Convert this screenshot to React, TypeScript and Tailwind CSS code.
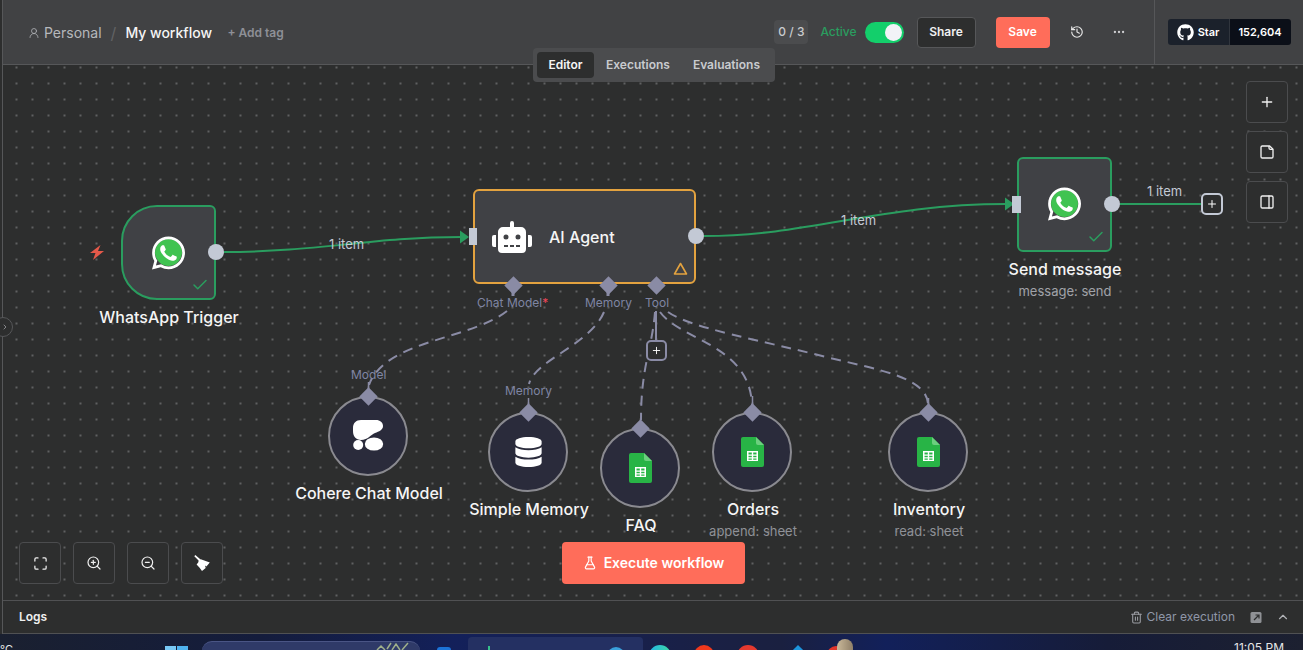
import React from "react";
import {
  UserRound, History, Ellipsis, Plus, PanelRight, Maximize, ZoomIn, ZoomOut,
  FlaskConical, Trash2, ChevronUp, ChevronRight, Check,
} from "lucide-react";
import { FaGithub, FaWhatsapp, FaRobot, FaDatabase } from "react-icons/fa";

function WhatsApp({ className }: { className: string }) {
  return (
    <div className={"absolute w-[33px] h-[34px] " + className}>
      <div className="absolute left-[3px] top-[3px] w-[27px] h-[27px] rounded-full bg-[#40c351]" />
      <FaWhatsapp className="absolute left-0 top-[-2px] w-[33px] h-[38px] text-white" />
    </div>
  );
}

function Sheets() {
  return (
    <svg width="23" height="30" viewBox="0 0 23 30">
      <path d="M2 0H15L23 8V28a2 2 0 0 1-2 2H2a2 2 0 0 1-2-2V2a2 2 0 0 1 2-2z" fill="#28b446" />
      <path d="M15 0L23 8H17a2 2 0 0 1-2-2z" fill="#6ccf7f" />
      <path d="M6 14H17V24H6zM7.5 17.5H10.8V15.5H7.5zM12.2 17.5H15.5V15.5H12.2zM7.5 20.2H10.8V18.8H7.5zM12.2 20.2H15.5V18.8H12.2zM7.5 22.8H10.8V21.6H7.5zM12.2 22.8H15.5V21.6H12.2z" fill="#fff" fillRule="evenodd" />
    </svg>
  );
}

function Cohere() {
  return (
    <svg width="32" height="32" viewBox="0 0 32 32">
      <path d="M9 0H24C28 0 31 2.5 31 6C31 10 27 11.5 23 13C19 14.5 16 20 9 20C4 20 1 16.5 1 11V8C1 3 4 0 9 0z" fill="#fff" />
      <circle cx="6.2" cy="25" r="5" fill="#fff" />
      <ellipse cx="22" cy="24" rx="9.2" ry="6.6" fill="#fff" />
    </svg>
  );
}

function Broom() {
  return (
    <svg width="16" height="16" viewBox="0 0 16 16" fill="#fff">
      <path d="M0.3 1.2L1.3 0L6.6 4.4L5.1 6z" />
      <path d="M4.8 5.2L6.8 4.2L15.8 7.4L12.4 11.4L11 10.6L11.7 13L8 16L5.6 12.8L2.6 9.6L4.2 7.4z" />
    </svg>
  );
}

function ToolBtn({ children }: { children: React.ReactNode }) {
  return (
    <div className="w-[42px] h-[42px] flex items-center justify-center rounded-[4px] border border-[#4b4c4e] bg-[#2d2e2e] text-[#f0f0f0]">
      {children}
    </div>
  );
}

function Circle({ className, children }: { className: string; children: React.ReactNode }) {
  return (
    <div className={"absolute w-[80px] h-[80px] rounded-full border-2 border-[#8a8a90] bg-[#2a2b3b] flex items-center justify-center " + className}>
      {children}
    </div>
  );
}

function Diamond({ className }: { className: string }) {
  return <div className={"absolute w-[13px] h-[13px] rotate-45 bg-[#8a8ba5] " + className} />;
}

export default function App() {
  return (
    <div className="relative w-[1303px] h-[650px] overflow-hidden flex flex-col bg-[#2d2e2e] [font-family:Inter,sans-serif]">
      {/* header */}
      <header className="h-[65px] shrink-0 flex items-center bg-[#414244] border-b border-[#565759] pl-[28px]">
        <div className="flex items-center pt-[2px]">
          <div className="flex items-center gap-[4px] text-[#b6b8bc] text-sm">
            <UserRound size={12} strokeWidth={1.5} />
            <span>Personal</span>
          </div>
          <span className="mx-[9px] text-[#626365] text-base">/</span>
          <span className="text-sm font-medium text-[#f5f5f5] w-[86px] whitespace-nowrap">My workflow</span>
          <span className="ml-[16px] text-xs font-semibold text-[#8e9097] w-[58px] whitespace-nowrap">+ Add tag</span>
        </div>

        <div className="ml-[489px] h-[24px] w-[34px] rounded-[4px] bg-[#4b4c4e] text-[#c9cbce] text-xs font-medium flex items-center justify-center whitespace-nowrap">0 / 3</div>
        <span className="ml-[12px] text-xs font-medium text-[#2a9d5f]">Active</span>
        <div className="ml-[8px] w-[39px] h-[21px] rounded-full bg-[#13cf6b] flex items-center justify-end pr-[2px]">
          <div className="w-[17px] h-[17px] rounded-full bg-[#f2f3f7]" />
        </div>
        <div className="ml-[13px] w-[59px] h-[31px] rounded-[4px] bg-[#2d2e2e] border border-[#565759] text-[#f0f0f0] text-xs font-semibold flex items-center justify-center">Share</div>
        <div className="ml-[20px] w-[54px] h-[31px] rounded-[4px] bg-[#ff6d5a] text-white text-xs font-semibold flex items-center justify-center">Save</div>
        <History size={14} className="ml-[20px] text-[#e8e8e8]" />
        <Ellipsis size={14} className="ml-[28px] text-[#cfcfd2]" />
        <div className="ml-[28px] h-[65px] border-l border-[#565759] pl-[13px] flex items-center">
          <div className="flex h-[26px] rounded-[3px] overflow-hidden text-white text-[11px] font-semibold">
            <div className="w-[61px] bg-[#1b212b] flex items-center justify-center gap-[4px]">
              <FaGithub size={17} />
              <span>Star</span>
            </div>
            <div className="w-[62px] bg-[#0b0f18] border-l border-[#30353d] flex items-center justify-center">152,604</div>
          </div>
        </div>
      </header>

      {/* canvas */}
      <main className="relative flex-1 bg-[#2d2e2e] bg-[radial-gradient(circle_at_center,#606162_0.7px,transparent_1px)] bg-[size:16px_16px] bg-[position:8.5px_-5.5px]">
        <svg className="absolute left-0 top-0" width="1303" height="535" viewBox="0 65 1303 535" fill="none">
          <g stroke="#2a9d5f" strokeWidth="2">
            <path d="M224 252C320 252 370 237 462 237" />
            <path d="M704 236C810 236 880 204 1006 204" />
            <path d="M1120 204H1201" />
          </g>
          <g fill="#2a9d5f">
            <path d="M460 230.5L469 237L460 243.5z" />
            <path d="M1005 197.5L1014 204L1005 210.5z" />
          </g>
          <g stroke="#8a8ba5" strokeWidth="2" strokeDasharray="10 7">
            <path d="M507 311C470 340 385 340 369 385" />
            <path d="M604 312C590 345 535 360 529 384" />
            <path d="M655 312C652 350 641 365 641 420" />
            <path d="M660 312C680 340 750 345 752 405" />
            <path d="M668 312C690 328 760 340 830 358C880 370 928 378 928 405" />
          </g>
          <path d="M656 311V342" stroke="#8a8ba5" strokeWidth="2" />
          <path d="M513 290V296M608 290V296" stroke="#8a8ba5" strokeWidth="3" />
          <path d="M368.5 382V392M528.5 398V408M928.5 398V408M752.5 396V408" stroke="#8a8ba5" strokeWidth="1.5" />
        </svg>

        {/* tabs */}
        <div className="absolute left-[533px] top-[-17px] w-[242px] h-[34px] rounded-[4px] bg-[#4b4c4e] p-[4px] flex items-center text-xs font-semibold text-[#c9cbce]">
          <div className="w-[57px] h-[26px] rounded-[4px] bg-[#2d2e2e] text-[#f5f5f5] flex items-center justify-center">Editor</div>
          <span className="ml-[12px]">Executions</span>
          <span className="ml-[23px]">Evaluations</span>
        </div>

        {/* trigger */}
        <svg className="absolute left-[90px] top-[180px]" width="14" height="15" viewBox="0 0 14 15">
          <path d="M10.5 0L0 8H5.5L3 15L14 6H8z" fill="#e5594a" />
        </svg>
        <div className="absolute left-[121px] top-[140px] w-[95px] h-[95px] rounded-l-[36px] rounded-r-[6px] border-2 border-[#2a9d5f] bg-[#404145]" />
        <WhatsApp className="left-[152px] top-[171px]" />
        <Check size={18} className="absolute left-[191px] top-[211px] text-[#2a9d5f]" />
        <div className="absolute left-[208px] top-[179px] w-[16px] h-[16px] rounded-full bg-[#c3c9d5]" />
        <div className="absolute left-[69px] top-[241px] w-[200px] text-center text-base font-medium text-[#f5f5f5] leading-[22px]">WhatsApp Trigger</div>
        <div className="absolute left-[329px] top-[171px] text-[13px] text-[#c3c9d5] leading-4">1 item</div>

        {/* agent */}
        <div className="absolute left-[473px] top-[124px] w-[223px] h-[95px] rounded-[6px] border-2 border-[#e3a23f] bg-[#404145] flex items-center text-[#f5f5f5]">
          <FaRobot className="ml-[17px] w-[40px] h-[32px] text-white" />
          <span className="ml-[17px] text-base font-medium">AI Agent</span>
        </div>
        <div className="absolute left-[469px] top-[163px] w-[8px] h-[17px] bg-[#c3c9d5]" />
        <div className="absolute left-[688px] top-[163px] w-[16px] h-[16px] rounded-full bg-[#c3c9d5]" />
        <svg className="absolute left-[673px] top-[197px]" width="15" height="13" viewBox="0 0 15 13" fill="none">
          <path d="M7.5 1.5L13.5 12H1.5z" stroke="#e3a23f" strokeWidth="1.6" strokeLinejoin="round" />
        </svg>
        <Diamond className="left-[507px] top-[214px]" />
        <Diamond className="left-[602px] top-[214px]" />
        <Diamond className="left-[650px] top-[214px]" />
        <div className="absolute left-[477px] top-[230px] text-xs leading-4 text-[#7f85a3]">Chat Model<span className="text-[#f0475a]">*</span></div>
        <div className="absolute left-[585px] top-[230px] text-xs leading-4 text-[#7f85a3]">Memory</div>
        <div className="absolute left-[645px] top-[230px] text-xs leading-4 text-[#7f85a3]">Tool</div>
        <div className="absolute left-[646px] top-[275px] w-[21px] h-[21px] rounded-[5px] border-2 border-[#8a8ba5] bg-[#2d2e2e] flex items-center justify-center text-white">
          <Plus size={11} />
        </div>
        <div className="absolute left-[841px] top-[147px] text-[13px] text-[#c3c9d5] leading-4">1 item</div>

        {/* send */}
        <div className="absolute left-[1017px] top-[92px] w-[95px] h-[95px] rounded-[6px] border-2 border-[#2a9d5f] bg-[#404145]" />
        <div className="absolute left-[1012px] top-[131px] w-[9px] h-[17px] bg-[#c3c9d5]" />
        <WhatsApp className="left-[1048px] top-[122px]" />
        <Check size={18} className="absolute left-[1087px] top-[163px] text-[#2a9d5f]" />
        <div className="absolute left-[1104px] top-[131px] w-[16px] h-[16px] rounded-full bg-[#c3c9d5]" />
        <div className="absolute left-[965px] top-[193px] w-[200px] text-center text-base font-medium text-[#f5f5f5] leading-[22px]">Send message</div>
        <div className="absolute left-[965px] top-[218px] w-[200px] text-center text-[13px] text-[#a0a2a8] leading-4">message: send</div>
        <div className="absolute left-[1147px] top-[118px] text-[13px] text-[#c3c9d5] leading-4">1 item</div>
        <div className="absolute left-[1201px] top-[128px] w-[22px] h-[22px] rounded-[5px] border-2 border-[#c3c9d5] bg-[#2d2e2e] flex items-center justify-center text-white">
          <Plus size={12} />
        </div>

        {/* sub nodes */}
        <Circle className="left-[328px] top-[331px]"><Cohere /></Circle>
        <Diamond className="left-[362px] top-[325px]" />
        <div className="absolute left-[351px] top-[302px] text-xs leading-4 text-[#7f85a3]">Model</div>
        <div className="absolute left-[269px] top-[417px] w-[200px] text-center text-base font-medium text-[#f5f5f5] leading-[22px]">Cohere Chat Model</div>

        <Circle className="left-[488px] top-[347px]"><FaDatabase className="w-[27px] h-[30px] text-white" /></Circle>
        <Diamond className="left-[522px] top-[341px]" />
        <div className="absolute left-[505px] top-[318px] text-xs leading-4 text-[#7f85a3]">Memory</div>
        <div className="absolute left-[429px] top-[433px] w-[200px] text-center text-base font-medium text-[#f5f5f5] leading-[22px]">Simple Memory</div>

        <Circle className="left-[600px] top-[363px]"><Sheets /></Circle>
        <Diamond className="left-[634px] top-[357px]" />
        <div className="absolute left-[541px] top-[449px] w-[200px] text-center text-base font-medium text-[#f5f5f5] leading-[22px]">FAQ</div>

        <Circle className="left-[712px] top-[347px]"><Sheets /></Circle>
        <Diamond className="left-[746px] top-[341px]" />
        <div className="absolute left-[653px] top-[433px] w-[200px] text-center text-base font-medium text-[#f5f5f5] leading-[22px]">Orders</div>
        <div className="absolute left-[653px] top-[458px] w-[200px] text-center text-[13px] text-[#8f9197] leading-4">append: sheet</div>

        <Circle className="left-[888px] top-[347px]"><Sheets /></Circle>
        <Diamond className="left-[922px] top-[341px]" />
        <div className="absolute left-[829px] top-[433px] w-[200px] text-center text-base font-medium text-[#f5f5f5] leading-[22px]">Inventory</div>
        <div className="absolute left-[829px] top-[458px] w-[200px] text-center text-[13px] text-[#8f9197] leading-4">read: sheet</div>

        {/* right tools */}
        <div className="absolute left-[1246px] top-[16px] flex flex-col gap-[8px]">
          <ToolBtn><Plus size={16} /></ToolBtn>
          <ToolBtn>
            <svg width="16" height="16" viewBox="0 0 24 24" fill="none" stroke="currentColor" strokeWidth="2" strokeLinejoin="round">
              <path d="M5 3h11l5 5v11a2 2 0 0 1-2 2H5a2 2 0 0 1-2-2V5a2 2 0 0 1 2-2z" />
              <path d="M15 3v3a2 2 0 0 0 2 2h4" />
            </svg>
          </ToolBtn>
          <ToolBtn><PanelRight size={16} /></ToolBtn>
        </div>

        {/* bottom tools */}
        <div className="absolute left-[19px] top-[477px] flex gap-[12px]">
          <ToolBtn><Maximize size={15} /></ToolBtn>
          <ToolBtn><ZoomIn size={16} strokeWidth={1.8} /></ToolBtn>
          <ToolBtn><ZoomOut size={16} strokeWidth={1.8} /></ToolBtn>
          <ToolBtn><Broom /></ToolBtn>
        </div>

        {/* execute */}
        <div className="absolute left-[562px] top-[477px] w-[183px] h-[42px] rounded-[4px] bg-[#ff6d5a] text-white text-sm font-semibold flex items-center justify-center gap-[7px]">
          <FlaskConical size={14} />
          <span>Execute workflow</span>
        </div>
      </main>

      {/* logs */}
      <section className="h-[34px] shrink-0 flex items-center bg-[#2d2e2e] border-y border-[#505153] pl-[19px] pr-[13px]">
        <span className="text-xs font-semibold text-[#f0f0f0]">Logs</span>
        <div className="ml-auto flex items-center text-xs text-[#8f97a8]">
          <Trash2 size={13} className="text-[#9a9ca2]" />
          <span className="ml-[4px]">Clear execution</span>
          <svg className="ml-[15px]" width="13" height="13" viewBox="0 0 13 13">
            <rect x="0.5" y="1" width="11" height="11" rx="1.5" fill="#8f9195" />
            <path d="M4 9L8.5 4.5M5.5 4H9V7.5" stroke="#2d2e2e" strokeWidth="1.2" fill="none" />
          </svg>
          <ChevronUp size={14} className="ml-[13px] text-[#b0b2b6]" />
        </div>
      </section>

      {/* taskbar */}
      <footer className="h-[16px] shrink-0 overflow-hidden flex items-start bg-[linear-gradient(90deg,#1a2030_0%,#141c3c_20%,#13205a_35%,#1a2044_55%,#1a2040_60%,#12205a_68%,#161c38_85%,#1c2030_100%)] text-[11px] text-[#e6e6e6]">
        <span className="w-[13px] shrink-0 mt-[9px] leading-3 whitespace-nowrap">°C</span>
        <div className="ml-[152px] mt-[12px] w-[23px] shrink-0 grid grid-cols-2 gap-[1px]">
          <div className="h-[10px] bg-[#78c8f5]" />
          <div className="h-[10px] bg-[#4fb2ef]" />
        </div>
        <div className="ml-[14px] mt-[7px] w-[218px] shrink-0 h-[20px] rounded-t-[10px] bg-[#2f3a68] border-t border-[#4a5585] flex justify-end pr-[10px]">
          <svg width="34" height="9" viewBox="0 0 34 9" fill="none" stroke="#9fb08a" strokeWidth="1.5">
            <path d="M1 8L5 4L9 8M11 7L15 1M16 8L20 2L24 8M26 8L32 1" />
          </svg>
        </div>
        <div className="ml-[17px] mt-[13px] w-[14px] shrink-0 h-[10px] rounded-t-[3px] bg-[#1c73d8]" />
        <div className="ml-[17px] mt-[3px] w-[175px] shrink-0 h-[20px] rounded-t-[4px] bg-[#243062] pl-[20px] pt-[9px]">
          <div className="w-[2px] h-[10px] bg-[#35c08a]" />
        </div>
        <div className="-ml-[36px] mt-[13px] w-[18px] shrink-0 h-[18px] rounded-full bg-[#3aa0dc]" />
        <div className="ml-[24px] mt-[11px] w-[22px] shrink-0 h-[22px] rounded-full bg-[linear-gradient(90deg,#23b6e8,#3ed8a0)]" />
        <div className="ml-[23px] mt-[11px] w-[20px] shrink-0 h-[20px] rounded-full bg-[#f0381c]" />
        <div className="ml-[23px] mt-[11px] w-[22px] shrink-0 h-[22px] rounded-full bg-[#e5392f]" />
        <div className="ml-[34px] mt-[13px] w-[10px] shrink-0 h-[10px] rotate-45 bg-[#1d94dc]" />
        <div className="ml-[24px] mt-[12px] w-[18px] shrink-0 h-[18px] rounded-full bg-[#e0352b]" />
        <div className="-ml-[8px] mt-[5px] w-[16px] shrink-0 h-[22px] rounded-t-full bg-[linear-gradient(90deg,#c9b899,#8f7f68)]" />
        <span className="ml-auto mr-[19px] mt-[8px] leading-3 whitespace-nowrap text-xs">11:05 PM</span>
      </footer>

      {/* left edge */}
      <div className="absolute left-0 top-0 w-[3px] h-[634px] bg-[#2d2e2e] border-r border-[#565759]" />
      <div className="absolute left-[-7px] top-[317px] w-[20px] h-[20px] rounded-full border border-[#565759] bg-[#2d2e2e] flex items-center justify-end pr-[3px] text-[#b0b2b6]">
        <ChevronRight size={8} />
      </div>
    </div>
  );
}
